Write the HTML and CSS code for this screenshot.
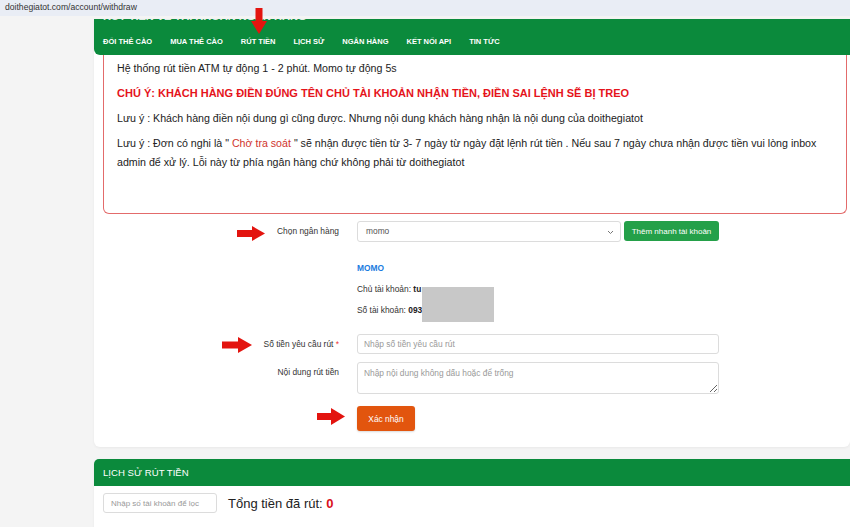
FILE: index.html
```html
<!DOCTYPE html>
<html lang="vi">
<head>
<meta charset="utf-8">
<title>Rút tiền</title>
<link rel="stylesheet" href="styles.css">
</head>
<body>
<div class="addr">doithegiatot.com/account/withdraw</div>
<div class="page">
  <section class="card">
    <header class="card-head">
      <div class="title-cut"><span>RÚT TIỀN VỀ TÀI KHOẢN NGÂN HÀNG</span></div>
      <nav class="nav">
        <a href="#">ĐỔI THẺ CÀO</a>
        <a href="#">MUA THẺ CÀO</a>
        <a href="#">RÚT TIỀN</a>
        <a href="#">LỊCH SỬ</a>
        <a href="#">NGÂN HÀNG</a>
        <a href="#">KẾT NỐI API</a>
        <a href="#">TIN TỨC</a>
      </nav>
    </header>
    <div class="card-body">
      <div class="notice">
        <p>Hệ thống rút tiền ATM tự động 1 - 2 phút. Momo tự động 5s</p>
        <p class="warn">CHÚ Ý: KHÁCH HÀNG ĐIỀN ĐÚNG TÊN CHỦ TÀI KHOẢN NHẬN TIỀN, ĐIỀN SAI LỆNH SẼ BỊ TREO</p>
        <p>Lưu ý : Khách hàng điền nội dung gì cũng được. Nhưng nội dung khách hàng nhận là nội dung của doithegiatot</p>
        <p>Lưu ý : Đơn có nghi là " <span class="hl">Chờ tra soát</span> " sẽ nhận được tiền từ 3- 7 ngày từ ngày đặt lệnh rút tiền . Nếu sau 7 ngày chưa nhận được tiền vui lòng inbox admin để xử lý. Lỗi này từ phía ngân hàng chứ không phải từ doithegiatot</p>
      </div>
      <form class="form">
        <div class="row">
          <div class="label label-select">Chọn ngân hàng</div>
          <div class="ctrl ctrl-select">
            <div class="select"><span>momo</span>
              <svg class="chev" width="7" height="5" viewBox="0 0 7 5"><path d="M1 1 L3.5 3.5 L6 1" fill="none" stroke="#777" stroke-width="1"/></svg>
            </div>
            <button type="button" class="btn btn-green">Thêm nhanh tài khoản</button>
          </div>
        </div>
        <div class="row">
          <div class="label"></div>
          <div class="ctrl bank">
            <div class="bank-name">MOMO</div>
            <div>Chủ tài khoản: <b>tu</b></div>
            <div>Số tài khoản: <b>093</b></div>
          </div>
        </div>
        <div class="row">
          <div class="label">Số tiền yêu cầu rút <span class="req">*</span></div>
          <div class="ctrl"><input class="input" type="text" placeholder="Nhập số tiền yêu cầu rút"></div>
        </div>
        <div class="row row-gap">
          <div class="label">Nội dung rút tiền</div>
          <div class="ctrl"><textarea class="textarea" placeholder="Nhập nội dung không dấu hoặc để trống"></textarea></div>
        </div>
        <div class="row row-btn">
          <div class="label"></div>
          <div class="ctrl"><button type="button" class="btn btn-orange">Xác nhận</button></div>
        </div>
      </form>
    </div>
  </section>
  <section class="card card2">
    <header class="card2-head">LỊCH SỬ RÚT TIỀN</header>
    <div class="card2-body">
      <input class="filter" type="text" placeholder="Nhập số tài khoản để lọc">
      <div class="total">Tổng tiền đã rút: <b>0</b></div>
    </div>
  </section>
</div>

<div class="redact"></div>

<svg class="arrow arrow-down" width="16" height="26" viewBox="0 0 16 26"><rect x="4.5" y="0" width="7" height="14" fill="#e3140f"/><polygon points="0,13 16,13 8,26" fill="#e3140f"/></svg>
<svg class="arrow arrow-bank" width="28" height="15" viewBox="0 0 28 15"><rect x="0" y="4" width="16" height="7" fill="#e3140f"/><polygon points="15,0 28,7.5 15,15" fill="#e3140f"/></svg>
<svg class="arrow arrow-amount" width="30" height="16" viewBox="0 0 30 16"><rect x="0" y="4.5" width="17" height="7" fill="#e3140f"/><polygon points="16,0 30,8 16,16" fill="#e3140f"/></svg>
<svg class="arrow arrow-submit" width="28" height="17" viewBox="0 0 28 17"><rect x="0" y="5" width="15" height="7" fill="#e3140f"/><polygon points="14,0 28,8.5 14,17" fill="#e3140f"/></svg>
</body>
</html>
```
FILE: styles.css
```css
* { box-sizing: border-box; }
html, body { margin: 0; padding: 0; }
body {
  width: 850px;
  height: 527px;
  overflow: hidden;
  background: #f4f4f4;
  font-family: "Liberation Sans", Arial, sans-serif;
  color: #222;
  position: relative;
}
.addr {
  height: 16px;
  background: #e9edf5;
  font-size: 8.6px;
  line-height: 15px;
  padding-left: 5px;
  color: #333;
}
.page { padding: 3px 0 0 94px; }

.card {
  width: 756px;
  background: #fff;
  border-radius: 0 0 6px 6px;
  box-shadow: 0 1px 3px rgba(0,0,0,0.05);
}
.card-head {
  background: #0b8a3c;
  border-radius: 0 0 0 6px;
  color: #fff;
}
.title-cut { height: 4px; overflow: hidden; padding-left: 9px; }
.title-cut span {
  display: block;
  font-weight: bold;
  font-size: 11px;
  line-height: 11px;
  margin-top: -8px;
  opacity: 0.85;
}
.nav {
  display: flex;
  gap: 18px;
  height: 32px;
  padding: 4px 0 0 9px;
  align-items: center;
}
.nav a {
  color: #fff;
  text-decoration: none;
  font-weight: bold;
  font-size: 7.5px;
}

.card-body { padding: 0 3px 16px 9px; }
.notice {
  border: 1px solid #e36b6b;
  border-top: 0;
  border-radius: 0 0 6px 6px;
  height: 159px;
  padding: 4px 13px 0;
  font-size: 10.65px;
  line-height: 19px;
  color: #222;
}
.notice p { margin: 0 0 6px; }
.notice .warn { color: #e5141b; font-weight: bold; font-size: 11px; }
.notice .hl { color: #d0342c; }

.form { margin: 7px 0 0 112px; }
.row { display: flex; column-gap: 18px; align-items: flex-start; }
.label {
  width: 124px;
  flex: none;
  text-align: right;
  font-size: 8.4px;
  line-height: 20px;
  color: #333;
}
.label-select { line-height: 21px; }
.req { color: #e33; }
.ctrl { width: 362px; flex: none; }
.ctrl-select { display: flex; gap: 3px; }
.select {
  width: 264px;
  height: 21px;
  border: 1px solid #dcdcdc;
  border-radius: 3px;
  display: flex;
  align-items: center;
  justify-content: space-between;
  padding: 0 6px 2px 8px;
  font-size: 8.4px;
  color: #555;
}
.chev { margin-top: 3px; }
.btn {
  border: 0;
  font-family: "Liberation Sans", Arial, sans-serif;
  color: #fff;
  border-radius: 3px;
  padding: 0;
  cursor: pointer;
}
.btn-green {
  width: 95px;
  height: 20px;
  background: #24a049;
  font-size: 8px;
}
.bank {
  padding: 16px 0 13px;
  font-size: 8.4px;
  line-height: 21px;
  color: #333;
}
.bank-name { color: #1a7be0; font-weight: bold; }
.bank b { color: #222; }
.input, .textarea, .filter {
  display: block;
  border: 1px solid #dcdcdc;
  border-radius: 3px;
  font-family: "Liberation Sans", Arial, sans-serif;
  color: #333;
  outline: none;
  margin: 0;
}
.input {
  width: 362px;
  height: 20px;
  padding: 0 6px;
  font-size: 8.4px;
}
.row-gap { margin-top: 8px; }
.textarea {
  width: 362px;
  height: 32px;
  padding: 5px 6px;
  font-size: 8.4px;
  line-height: 10px;
  resize: vertical;
}
.input::placeholder, .textarea::placeholder, .filter::placeholder { color: #999; }
.row-btn { margin-top: 12px; }
.btn-orange {
  width: 58px;
  height: 25px;
  background: #e2550e;
  font-size: 8.4px;
  box-shadow: 0 1px 2px rgba(0,0,0,0.15);
}

.card2 {
  margin-top: 12px;
  border-radius: 6px 0 0 0;
  height: 80px;
}
.card2-head {
  height: 27px;
  background: #0b8a3c;
  border-radius: 5px 0 0 0;
  color: #fff;
  font-size: 9.6px;
  line-height: 27px;
  padding-left: 9px;
}
.card2-body {
  display: flex;
  align-items: center;
  gap: 11px;
  padding: 7px 9px;
}
.filter {
  width: 114px;
  height: 20px;
  padding: 0 7px;
  font-size: 8px;
}
.total { font-size: 13px; color: #222; }
.total b { color: #d9101c; }

.redact {
  position: absolute;
  left: 422px;
  top: 287px;
  width: 72px;
  height: 35px;
  background: #c8c8c8;
}
.arrow { position: absolute; }
.arrow-down { left: 251px; top: 8px; }
.arrow-bank { left: 237px; top: 226px; }
.arrow-amount { left: 222px; top: 337px; }
.arrow-submit { left: 317px; top: 408px; }
```
